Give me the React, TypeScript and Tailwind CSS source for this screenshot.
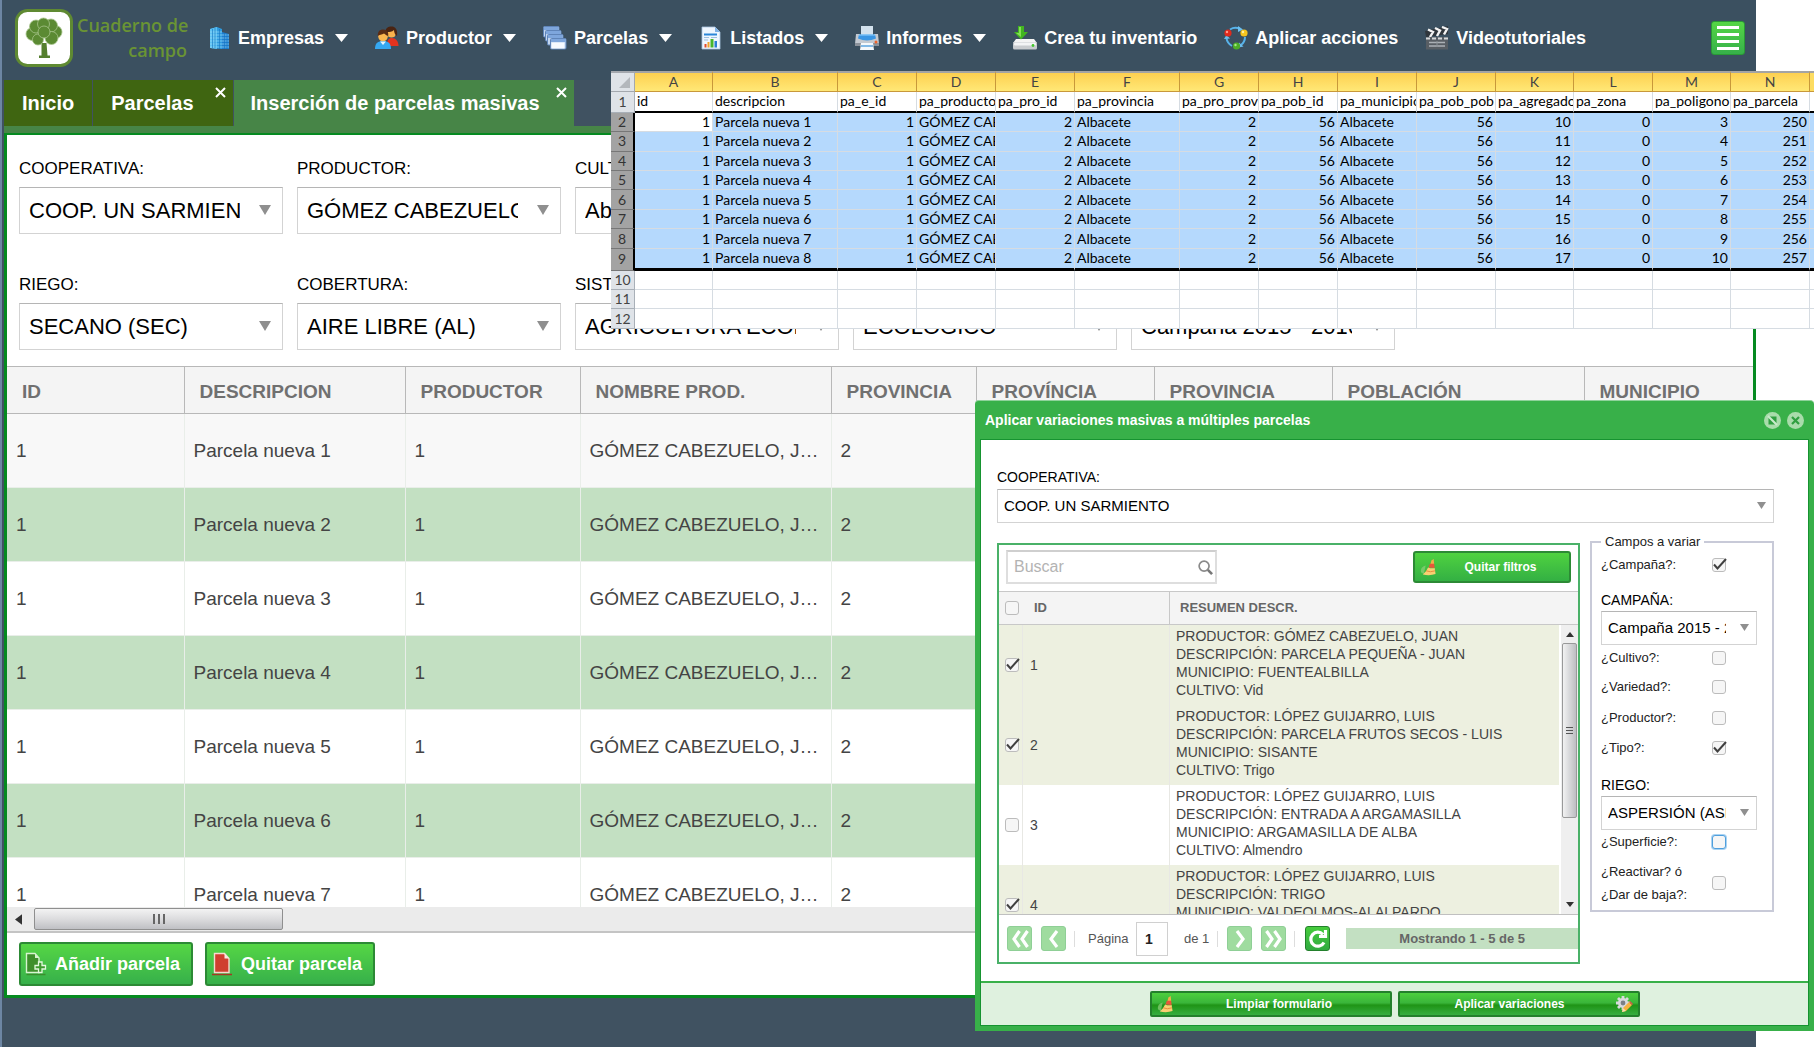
import React from "react";

const MENU: { label: string; icon: () => React.JSX.Element; menu: boolean }[] = [
  { label: "Empresas", icon: BuildingIcon, menu: true },
  { label: "Productor", icon: PeopleIcon, menu: true },
  { label: "Parcelas", icon: WindowsIcon, menu: true },
  { label: "Listados", icon: ReportIcon, menu: true },
  { label: "Informes", icon: PrinterIcon, menu: true },
  { label: "Crea tu inventario", icon: DriveIcon, menu: false },
  { label: "Aplicar acciones", icon: CycleIcon, menu: false },
  { label: "Videotutoriales", icon: ClapperIcon, menu: false },
];

const FILTERS_TOP = [
  { label: "COOPERATIVA:", value: "COOP. UN SARMIENTO" },
  { label: "PRODUCTOR:", value: "GÓMEZ CABEZUELO, JUAN" },
  { label: "CULTIVO:", value: "Abedul" },
];

const FILTERS_BOTTOM = [
  { label: "RIEGO:", value: "SECANO (SEC)" },
  { label: "COBERTURA:", value: "AIRE LIBRE (AL)" },
  { label: "SISTEMA:", value: "AGRICULTURA ECOLÓGICA" },
  { label: "CALIFICACIÓN:", value: "ECOLÓGICO" },
  { label: "CAMPAÑA:", value: "Campaña 2015 - 2016" },
];

const GRID_COLUMNS = [
  { title: "ID", width: "w-[177px]" },
  { title: "DESCRIPCION", width: "w-[221px]" },
  { title: "PRODUCTOR", width: "w-[175px]" },
  { title: "NOMBRE PROD.", width: "w-[251px]" },
  { title: "PROVINCIA", width: "w-[145px]" },
  { title: "PROVÍNCIA", width: "w-[178px]" },
  { title: "PROVINCIA", width: "w-[178px]" },
  { title: "POBLACIÓN", width: "w-[252px]" },
  { title: "MUNICIPIO", width: "" },
];

const SHEET_COLUMNS = [
  { letter: "A", field: "id", width: "w-[78px]" },
  { letter: "B", field: "descripcion", width: "w-[125px]" },
  { letter: "C", field: "pa_e_id", width: "w-[79px]" },
  { letter: "D", field: "pa_producto", width: "w-[79px]" },
  { letter: "E", field: "pa_pro_id", width: "w-[79px]" },
  { letter: "F", field: "pa_provincia", width: "w-[105px]" },
  { letter: "G", field: "pa_pro_prov", width: "w-[79px]" },
  { letter: "H", field: "pa_pob_id", width: "w-[79px]" },
  { letter: "I", field: "pa_municipio", width: "w-[79px]" },
  { letter: "J", field: "pa_pob_pob", width: "w-[79px]" },
  { letter: "K", field: "pa_agregado", width: "w-[78px]" },
  { letter: "L", field: "pa_zona", width: "w-[79px]" },
  { letter: "M", field: "pa_poligono", width: "w-[78px]" },
  { letter: "N", field: "pa_parcela", width: "w-[79px]" },
];

const PLOTS = [
  {
    id: 1,
    checked: true,
    lines: ["PRODUCTOR: GÓMEZ CABEZUELO, JUAN", "DESCRIPCIÓN: PARCELA PEQUEÑA - JUAN", "MUNICIPIO: FUENTEALBILLA", "CULTIVO: Vid"],
  },
  {
    id: 2,
    checked: true,
    lines: ["PRODUCTOR: LÓPEZ GUIJARRO, LUIS", "DESCRIPCIÓN: PARCELA FRUTOS SECOS - LUIS", "MUNICIPIO: SISANTE", "CULTIVO: Trigo"],
  },
  {
    id: 3,
    checked: false,
    lines: ["PRODUCTOR: LÓPEZ GUIJARRO, LUIS", "DESCRIPCIÓN: ENTRADA A ARGAMASILLA", "MUNICIPIO: ARGAMASILLA DE ALBA", "CULTIVO: Almendro"],
  },
  {
    id: 4,
    checked: true,
    lines: ["PRODUCTOR: LÓPEZ GUIJARRO, LUIS", "DESCRIPCIÓN: TRIGO", "MUNICIPIO: VALDEOLMOS-ALALPARDO", ""],
  },
];

/* ---------- icons ---------- */

function BuildingIcon() {
  return (
    <svg viewBox="0 0 24 24" className="size-6">
      <path d="M3 3 10 1 15 3V23L3 22Z" fill="#2f9be0" />
      <path d="M3 3 10 1V23L3 22Z" fill="#5cc1f3" />
      <path d="M15 6 22 8V23H15Z" fill="#1f7fd0" />
      <path d="M3 6h12M3 9h12M3 12h19M3 15h19M3 18h19M3 21h19M15 9h7" stroke="#9adcf8" strokeWidth=".7" />
      <path d="M5.500 3v19M8 2v20M12.500 3v20M17.500 7v16M20 8v15" stroke="#1672bd" strokeWidth=".6" />
    </svg>
  );
}

function PeopleIcon() {
  return (
    <svg viewBox="0 0 24 24" className="size-6">
      <path d="M12 20c0-6 1.500-8 5-8s6.500 3 6.500 8Z" fill="#e3331f" />
      <circle cx="16.500" cy="7" r="4.600" fill="#f9b24d" />
      <path d="M10.500 7C10 2 13 .5 16.500.5S23 3 22 10c-2-1-3-4-3-6-2 2-5 2-6 2s-1 4-2.500 1Z" fill="#4a2412" />
      <path d="M0 23c0-6 3-8 8-8s8 2 8 8Z" fill="#35a8f2" />
      <path d="M5 15.500 8 19l3-3.500Z" fill="#e8f6ff" />
      <circle cx="8" cy="10.500" r="4.800" fill="#fbb64f" />
      <path d="M2.800 10C2.500 5.500 5 3.500 8 3.500s6 2 5.200 6.500C11 9.500 10 8 9 7.500 7 9 4 8.500 2.800 10Z" fill="#5b2c14" />
    </svg>
  );
}

function WindowsIcon() {
  return (
    <svg viewBox="0 0 24 24" className="size-6">
      {[
        [0, 0],
        [2, 4],
        [4, 8],
        [7, 12],
      ].map(([x, y]) => (
        <g key={x}>
          <rect x={x + 0.5} y={y + 0.5} width="15.500" height="10.500" rx="1" fill="#c3d7f0" stroke="#5f84b8" />
          <rect x={x + 1} y={y + 1} width="14.500" height="3" fill="#7ea6dc" />
        </g>
      ))}
      <rect x="8.500" y="16.500" width="13" height="6" fill="#f6faff" />
    </svg>
  );
}

function ReportIcon() {
  return (
    <svg viewBox="0 0 24 24" className="size-6">
      <path d="M3 1h13l5 5v17H3Z" fill="#eef6ff" stroke="#a8c4e0" strokeWidth=".8" />
      <path d="M16 1v5h5Z" fill="#7fb2e6" />
      <path d="M5 8.500h13" stroke="#2a86d8" strokeWidth="2" />
      <path d="M5 11.500h5M5 14h4M12 11.500h6" stroke="#9dbfe0" />
      <rect x="5.500" y="18" width="2" height="3.500" fill="#e44a2a" />
      <rect x="8.500" y="16" width="2" height="5.500" fill="#f2a22a" />
      <rect x="11.500" y="13" width="3" height="8.500" fill="#48b62c" />
      <rect x="15.500" y="15" width="2.500" height="6.500" fill="#2b7fd4" />
    </svg>
  );
}

function PrinterIcon() {
  return (
    <svg viewBox="0 0 24 24" className="size-6">
      <rect x="6" y="0" width="12" height="10" fill="#d3e2ee" />
      <path d="M1 8h4v4h14V8h4l1 10H0Z" fill="#c3c9d1" />
      <path d="M4 8.500h16l1 4q-9 4-18 0Z" fill="#3a96e4" />
      <path d="M4 9h16" stroke="#8fd0ff" />
      <path d="M0 17h24v3H0Z" fill="#8b929b" />
      <path d="M6 17h12l1 7H5Z" fill="#f4f8fc" />
      <path d="M6 20h12" stroke="#5ba5e0" strokeWidth="1.500" />
      <circle cx="21" cy="16" r="1.500" fill="#f0642c" />
    </svg>
  );
}

function DriveIcon() {
  return (
    <svg viewBox="0 0 24 24" className="size-6">
      <path d="M3 13h18l3 4H0Z" fill="#f4f4f4" />
      <rect x="0" y="16" width="24" height="7.500" rx="1.500" fill="#c9cccf" />
      <rect x="1" y="16.500" width="22" height="3" rx="1" fill="#f3f4f5" />
      <circle cx="20" cy="19.500" r="1.400" fill="#43c62b" />
      <path d="M5 0h6v6h4l-7 7.500L1 6h4Z" fill="#42b51f" />
      <path d="M6 1h2v10L3 7h3Z" fill="#83e055" />
    </svg>
  );
}

function CycleIcon() {
  return (
    <svg viewBox="0 0 24 24" className="size-6">
      <g fill="none" stroke="#58b3ea" strokeWidth="2">
        <path d="M6 3.500q5-3 10-.5" />
        <path d="M21 11q0 5-4 8" />
        <path d="M8 20q-5-3-5.500-8" />
      </g>
      <path d="m14 0 5 3.500-5 2.500ZM15 16.500l-.5 5 5-1ZM0 13l2.500-4L6 12.500Z" fill="#6cc0f0" />
      <circle cx="4" cy="7" r="3.600" fill="#e02a1c" />
      <circle cx="20" cy="7" r="3.600" fill="#f7c51e" />
      <circle cx="12.500" cy="20" r="3.600" fill="#4cae27" />
      <circle cx="3" cy="6" r="1.200" fill="#ff9a8c" />
      <circle cx="19" cy="6" r="1.200" fill="#fff0a0" />
      <circle cx="11.500" cy="19" r="1.200" fill="#a8e884" />
    </svg>
  );
}

function ClapperIcon() {
  return (
    <svg viewBox="0 0 24 24" className="size-6">
      <path d="M0 5 23 0v8L1 11Z" fill="#30363c" />
      <path d="M3 3.500 8 6l-3 5M10 2l5 2.500-3 5.500M17 1l5 2-3 5.500" fill="none" stroke="#f3f3f3" strokeWidth="2.400" />
      <rect x="1" y="11" width="22" height="12.500" fill="#585e64" />
      <path d="M1 12.500h22" stroke="#d5d8da" strokeWidth="2" strokeDasharray="4 2" />
      <path d="M4 16.500h16M4 20h16" stroke="#aab0b5" strokeWidth="1.500" />
      <path d="M12 15v6" stroke="#8a9095" />
    </svg>
  );
}

function TreeLogo() {
  return (
    <svg viewBox="0 0 58 58" className="size-[58px]">
      <rect x="1.500" y="1.500" width="55" height="55" rx="11" fill="#fff" stroke="#5f8a32" strokeWidth="3" />
      <path d="M26.500 34h5l1 12.500h2.500V49H24v-2.500h2.500Z" fill="#557f2e" />
      <g fill="#5b8a33" stroke="#a7c48b" strokeWidth=".8">
        <circle cx="17.500" cy="25" r="6.500" />
        <circle cx="40.500" cy="23" r="6.500" />
        <circle cx="21" cy="17.500" r="6.500" />
        <circle cx="36" cy="16.500" r="6.500" />
        <circle cx="28.500" cy="15" r="6" />
        <circle cx="36.500" cy="29" r="6.500" />
        <circle cx="23" cy="30.500" r="5.500" />
        <circle cx="29" cy="23" r="6" />
      </g>
    </svg>
  );
}

function Caret({ className }: { className: string }) {
  return (
    <svg viewBox="0 0 12 9" className={className} preserveAspectRatio="none" aria-hidden="true">
      <path d="M0 0h12L6 9Z" fill="currentColor" />
    </svg>
  );
}

function BroomIcon() {
  return (
    <svg viewBox="0 0 18 18" className="size-[17px] shrink-0">
      <path d="M1 14q-1-5 5-7l-2 9Z" fill="#8fce7c" opacity=".7" />
      <path d="M12 1.500 14.500 0 15 5l-4 1Z" fill="#f0b04a" />
      <path d="M10.500 5h4.500l.5 4.500-6.500-.5Z" fill="#e8573a" />
      <path d="M8.500 9q4 1.500 7 .5l1 6.500q-6 2-13.500.5 4-3 5.500-7.500Z" fill="#f9cf72" />
      <path d="m6.500 12.500 4.500 1 5-1" stroke="#e8893a" strokeWidth="1" fill="none" />
    </svg>
  );
}

function GearPencilIcon() {
  return (
    <svg viewBox="0 0 18 18" className="size-[18px] shrink-0">
      <g stroke="#d9dadd" strokeWidth="2.800">
        <path d="M8 1v14M1 8h14M3 3l10 10M13 3 3 13" />
      </g>
      <circle cx="8" cy="8" r="5" fill="#d9dadd" />
      <circle cx="8" cy="8" r="2.400" fill="#7b8086" />
      <path d="m7 17 1-4 6-6 3 3-6 6Z" fill="#f5b23f" />
      <path d="m7 17 1-4 3 3Z" fill="#f7dfb4" />
      <path d="m14 7 1-1 3 3-1 1Z" fill="#d5584a" />
    </svg>
  );
}

function SheetAddIcon() {
  return (
    <svg viewBox="0 0 22 24" className="h-6 w-[22px] shrink-0">
      <path d="M1.500 22.500h19" stroke="#3b8d2c" strokeWidth="1.500" />
      <path d="M1.500 1.500h8.500l4 4.500v14.500H1.500Z" fill="#3f8f2c" stroke="#d8f3d0" strokeWidth="1.400" />
      <path d="M10 1.500V6h4Z" fill="#d8f3d0" />
      <path d="M13.500 10h3.500v3.500h3.500V17H17v3.500h-3.500V17H10v-3.500h3.500Z" fill="#3f9a2f" stroke="#e4f8de" strokeWidth="1.300" />
    </svg>
  );
}

function SheetRemoveIcon() {
  return (
    <svg viewBox="0 0 22 24" className="h-6 w-[22px] shrink-0">
      <path d="M1 22.500h20" stroke="#a33a22" strokeWidth="1.500" />
      <path d="M3.500 1.500h10l4.500 5v14H3.500Z" fill="#cf3f2f" stroke="#f6d9cf" strokeWidth="1.400" />
      <path d="M13.500 1.500v5H18Z" fill="#fbeae4" />
    </svg>
  );
}

/* ---------- shared controls ---------- */

function Combo({
  id,
  label,
  value,
  labelClass,
  selectClass,
  caretClass,
}: {
  id: string;
  label: string;
  value: string;
  labelClass: string;
  selectClass: string;
  caretClass: string;
}) {
  return (
    <div className="flex flex-col">
      <label htmlFor={id} className={`text-black ${labelClass}`}>
        {label}
      </label>
      <div className="relative">
        <select
          id={id}
          className={`block w-full appearance-none overflow-hidden border border-[#d3d3d3] border-t-[#b5b5b5] bg-white text-black outline-none ${selectClass}`}
        >
          <option>{value}</option>
        </select>
        <Caret className={`pointer-events-none absolute text-[#8f8f8f] ${caretClass}`} />
      </div>
    </div>
  );
}

function Check({ label, id, checked = false, focus = false }: { label?: string; id?: string; checked?: boolean; focus?: boolean }) {
  return (
    <span className="relative block size-[14px]">
      <input
        type="checkbox"
        id={id}
        aria-label={label}
        defaultChecked={checked}
        className={`peer block size-[14px] appearance-none rounded-[3px] border bg-[#f6f6f6] ${
          focus ? "border-[#4f9fdc] ring-1 ring-[#a9d3f3]" : "border-[#bcbcbc]"
        }`}
      />
      <svg viewBox="0 0 16 16" className="pointer-events-none absolute -top-px left-0 hidden size-4 peer-checked:block">
        <path d="M2 7.500 5.500 11.500 14 2" fill="none" stroke="#404040" strokeWidth="2" />
      </svg>
    </span>
  );
}

function FlagRow({ id, text, height, checked, focus }: { id: string; text: string; height: string; checked?: boolean; focus?: boolean }) {
  return (
    <div className={`flex items-center ${height}`}>
      <label htmlFor={id} className="w-[111px] text-[13px]">
        {text}
      </label>
      <Check id={id} checked={checked} focus={focus} />
    </div>
  );
}

/* ---------- main window ---------- */

function TopBar() {
  return (
    <header className="flex h-20 items-center bg-[#3b5060] pr-[11px] pb-1 pl-[13px]">
      <TreeLogo />
      <div className="ml-1 w-[110px] text-right font-['Open_Sans',sans-serif] text-[18px] leading-[25px] font-semibold whitespace-nowrap text-[#6a9434]">
        Cuaderno de
        <br />
        campo
      </div>
      <nav className="ml-5 flex flex-1 items-center gap-[27px]">
        {MENU.map(({ label, icon: Icon, menu }) => (
          <button key={label} type="button" className="flex items-center gap-[7px] text-[18px] leading-6 font-bold whitespace-nowrap text-white">
            <Icon />
            {label}
            {menu && <Caret className="ml-1 h-2 w-[13px]" />}
          </button>
        ))}
      </nav>
      <button
        type="button"
        aria-label="Menú"
        className="flex h-[34px] w-[34px] flex-col items-center justify-center gap-1 rounded-[3px] border border-[#2a9a35] bg-linear-to-b from-[#55d644] to-[#36b04a]"
      >
        <span className="h-[3px] w-[22px] bg-white" />
        <span className="h-[3px] w-[22px] bg-white" />
        <span className="h-[3px] w-[22px] bg-white" />
        <span className="h-[3px] w-[22px] bg-white" />
      </button>
    </header>
  );
}

function TabClose({ label }: { label: string }) {
  return (
    <button type="button" aria-label={label} className="absolute top-[7px] right-[7px]">
      <svg viewBox="0 0 11 11" className="size-[11px]">
        <path d="m1 1 9 9M10 1l-9 9" stroke="#fff" strokeWidth="2" />
      </svg>
    </button>
  );
}

function Tabs() {
  return (
    <div className="flex border-b-[7px] border-[#478547] text-[20px] leading-[46px] font-bold whitespace-nowrap text-white">
      <div className="mr-px bg-[#3f6511] px-[18px]">Inicio</div>
      <div className="relative mr-px bg-[#3f6511] pr-[39px] pl-[18px]">
        Parcelas
        <TabClose label="Cerrar Parcelas" />
      </div>
      <div className="relative bg-[#478547] pr-[34px] pl-[17px]">
        Inserción de parcelas masivas
        <TabClose label="Cerrar Inserción de parcelas masivas" />
      </div>
    </div>
  );
}

function FilterRow({ items, prefix }: { items: { label: string; value: string }[]; prefix: string }) {
  return (
    <div className="grid grid-cols-[repeat(5,264px)] gap-x-[14px]">
      {items.map((f, i) => (
        <Combo
          key={f.label}
          id={`${prefix}-${i}`}
          label={f.label}
          value={f.value}
          labelClass="text-[17px] leading-6 mb-1.5"
          selectClass="h-[47px] pl-[9px] pr-[42px] text-[22px]"
          caretClass="top-[18px] right-3 h-[10px] w-3"
        />
      ))}
    </div>
  );
}

function ParcelGrid() {
  return (
    <div>
      <div className="h-[541px] overflow-hidden border-t border-[#b8b8b8]">
        <table className="w-full table-fixed border-collapse text-left">
          <thead>
            <tr className="h-[46px] bg-[#f4f4f4]">
              {GRID_COLUMNS.map((c, i) => (
                <th
                  key={i}
                  className={`border-r border-b border-[#b8b8b8] pt-1 pl-[15px] text-[19px] leading-6 font-bold whitespace-nowrap text-[#707070] last:border-r-0 ${c.width}`}
                >
                  {c.title}
                </th>
              ))}
            </tr>
          </thead>
          <tbody className="text-[19px] leading-6 text-[#444]">
            {[1, 2, 3, 4, 5, 6, 7].map((n) => (
              <tr
                key={n}
                className={`h-[74px] [&>td]:truncate [&>td]:border-r [&>td]:border-b [&>td]:border-[#e9eee9] [&>td]:pt-0.5 [&>td]:pr-1 [&>td]:pl-[9px] ${
                  n === 1 ? "bg-[#f8f8f8]" : n % 2 ? "bg-white" : "bg-[#c3e0c2]"
                }`}
              >
                <td>1</td>
                <td>Parcela nueva {n}</td>
                <td>1</td>
                <td>GÓMEZ CABEZUELO, JUAN</td>
                <td>2</td>
                <td />
                <td />
                <td />
                <td />
              </tr>
            ))}
          </tbody>
        </table>
      </div>
      <div className="flex h-[26px] items-center gap-3 border-b-2 border-[#c4c4c4] bg-[#ebebeb] pl-2">
        <svg viewBox="0 0 8 12" className="h-[11px] w-[7px]">
          <path d="M8 0v12L0 6Z" fill="#333" />
        </svg>
        <div className="flex h-[22px] w-[249px] items-center justify-center gap-[3px] rounded-[2px] border border-[#8f8f8f] bg-linear-to-b from-[#f3f3f3] via-[#dcdcde] to-[#bfc0c4]">
          <span className="h-[10px] w-0.5 bg-[#666]" />
          <span className="h-[10px] w-0.5 bg-[#666]" />
          <span className="h-[10px] w-0.5 bg-[#666]" />
        </div>
      </div>
    </div>
  );
}

function MainWindow() {
  const actionClass =
    "flex h-11 items-center gap-2 rounded-[3px] border-2 border-[#2c8a35] bg-linear-to-b from-[#55d644] to-[#36b04a] pl-1 pr-[11px] text-[18px] font-bold text-white";
  return (
    <div className="mr-[58px] min-h-screen border-l-2 border-[#6d86a3] bg-[#405261] pl-0.5">
      <div className="-ml-0.5">
        <TopBar />
      </div>
      <Tabs />
      <main className="border-x-[3px] border-t-2 border-b-[3px] border-[#058a20] bg-white">
        <div className="flex flex-col gap-[39px] overflow-hidden px-3 pt-[22px] pb-4">
          <FilterRow items={FILTERS_TOP} prefix="top" />
          <FilterRow items={FILTERS_BOTTOM} prefix="bottom" />
        </div>
        <ParcelGrid />
        <div className="flex gap-3 px-3 pt-[9px] pb-[9px]">
          <button type="button" className={actionClass}>
            <SheetAddIcon />
            Añadir parcela
          </button>
          <button type="button" className={actionClass}>
            <SheetRemoveIcon />
            Quitar parcela
          </button>
        </div>
      </main>
    </div>
  );
}

/* ---------- spreadsheet ---------- */

function Spreadsheet() {
  const cell = "overflow-hidden whitespace-nowrap border-r border-b border-[#d6dce2] px-0.5 py-0";
  return (
    <div className="absolute top-[71px] right-0 left-[611px] overflow-hidden bg-white font-['Lato','Open_Sans',sans-serif] text-[14px] leading-[16px] text-black">
      <table className="h-[258px] w-full table-fixed border-separate border-spacing-0">
        <thead>
          <tr className="h-[21px] text-[#444]">
            <th className="w-6 border-t-2 border-r border-b border-[#a4a8ae] bg-[#dfe3e8] p-0">
              <svg viewBox="0 0 10 10" className="ml-2 size-[11px]">
                <path d="M10 0v10H0Z" fill="#b3b7bc" />
              </svg>
            </th>
            {SHEET_COLUMNS.map((c) => (
              <th
                key={c.letter}
                className={`border-t-2 border-r border-b border-t-[#a4a4a4] border-r-[#c8983a] border-b-[#c8983a] bg-linear-to-b from-[#fdd04f] to-[#ffe876] p-0 font-normal ${c.width}`}
              >
                {c.letter}
              </th>
            ))}
            <th className="border-t-2 border-b border-t-[#a4a4a4] border-b-[#c8983a] bg-[#fddc60] p-0" />
          </tr>
        </thead>
        <tbody>
          <tr>
            <th className="border-r border-b border-[#a9b0b8] bg-[#dfe3e8] p-0 font-normal text-[#444]">1</th>
            {SHEET_COLUMNS.map((c) => (
              <td key={c.letter} className="overflow-hidden border-r border-b-2 border-r-[#d6dce2] border-b-black px-0.5 py-0 whitespace-nowrap">
                {c.field}
              </td>
            ))}
            <td className="border-b-2 border-black p-0" />
          </tr>
          {[1, 2, 3, 4, 5, 6, 7, 8].map((n) => {
            const values = [1, `Parcela nueva ${n}`, 1, "GÓMEZ CABEZUELO", 2, "Albacete", 2, 56, "Albacete", 56, 9 + n, 0, 2 + n, 249 + n];
            return (
              <tr key={n}>
                <th className="border-r-2 border-b border-r-black border-b-[#777] bg-[#a3a3a3] p-0 font-normal text-[#333]">{n + 1}</th>
                {values.map((v, i) => (
                  <td
                    key={i}
                    className={`${cell} ${typeof v === "number" ? "text-right" : "text-left"} ${n === 1 && i === 0 ? "bg-white" : "bg-[#b5d9fd]"} ${
                      n === 8 ? "border-b-[3px] border-b-black" : ""
                    }`}
                  >
                    {v}
                  </td>
                ))}
                <td className={`bg-[#b5d9fd] p-0 ${n === 8 ? "border-b-[3px] border-black" : "border-b border-[#d6dce2]"}`} />
              </tr>
            );
          })}
          {[10, 11, 12].map((n) => (
            <tr key={n}>
              <th className="border-r border-b border-[#a9b0b8] bg-[#dfe3e8] p-0 font-normal text-[#444]">{n}</th>
              {SHEET_COLUMNS.map((c) => (
                <td key={c.letter} className={cell} />
              ))}
              <td className="border-b border-[#d6dce2] p-0" />
            </tr>
          ))}
        </tbody>
      </table>
    </div>
  );
}

/* ---------- dialog ---------- */

function PagerButton({ label, path, active = false }: { label: string; path: string; active?: boolean }) {
  return (
    <button
      type="button"
      aria-label={label}
      className={`flex size-[25px] items-center justify-center rounded-[3px] border ${
        active ? "border-[#23802c] bg-linear-to-b from-[#46cc3c] to-[#30aa40]" : "border-[#8fcf96] bg-[#9fdc9f]"
      }`}
    >
      <svg viewBox="0 0 20 20" className="size-5">
        <path d={path} fill="none" stroke="#fff" strokeWidth="3.200" />
      </svg>
    </button>
  );
}

function PlotPicker() {
  return (
    <div className="flex flex-1 flex-col border-2 border-[#4ab168]">
      <div className="flex items-start justify-between border-b border-[#c8c8c8] px-[7px] pt-[5px] pb-[7px]">
        <div className="relative">
          <input
            type="text"
            aria-label="Buscar"
            placeholder="Buscar"
            className="block h-[34px] w-[211px] border-2 border-[#dedede] border-t-[#cfcfcf] pr-7 pl-1.5 text-[16px] placeholder:text-[#b3b3b3]"
          />
          <svg viewBox="0 0 16 16" className="absolute top-[10px] right-1 size-[15px]">
            <circle cx="6.500" cy="6.500" r="5.300" fill="none" stroke="#8a8a8a" strokeWidth="1.800" />
            <path d="m10.500 10.500 4.500 4.500" stroke="#777" strokeWidth="2.800" />
          </svg>
        </div>
        <button
          type="button"
          className="mt-px flex h-8 w-[158px] items-center rounded-[3px] border-2 border-[#2c8a35] bg-linear-to-b from-[#4fd23f] to-[#33b043] px-[5px] text-[12px] font-bold text-white"
        >
          <BroomIcon />
          <span className="flex-1">Quitar filtros</span>
        </button>
      </div>

      <div className="flex h-[323px] overflow-hidden border-b border-[#c0c0c0]">
        <table className="-mr-[19px] w-full shrink-0 table-fixed border-separate border-spacing-0 self-start text-left text-[14px] leading-[18px] text-[#444]">
          <thead>
            <tr className="h-[33px] bg-[#f4f4f4] text-[13px] text-[#666]">
              <th className="w-[24px] border-b border-[#c8c8c8] p-0 pl-1.5">
                <Check label="Seleccionar todas" />
              </th>
              <th className="w-[147px] border-r border-b border-[#c8c8c8] p-0 pl-[11px]">ID</th>
              <th className="border-b border-[#c8c8c8] p-0 pl-[10px]">RESUMEN DESCR.</th>
            </tr>
          </thead>
          <tbody>
            {PLOTS.map((p) => (
              <tr key={p.id} className={`h-20 ${p.checked ? "bg-[#edf0e0]" : "bg-white"}`}>
                <td className="border-r border-[#e8e8e4] p-0 pl-1.5">
                  <Check label={`Parcela ${p.id}`} checked={p.checked} />
                </td>
                <td className="border-r border-[#e8e8e4] p-0 pl-[7px]">{p.id}</td>
                <td className="p-0 pb-1 pl-1.5 align-middle whitespace-nowrap">
                  {p.lines.map((l, i) => (
                    <div key={i} className="h-[18px]">
                      {l}
                    </div>
                  ))}
                </td>
              </tr>
            ))}
          </tbody>
        </table>
        <div className="z-10 mt-[33px] flex w-[19px] shrink-0 flex-col items-center border-l-2 border-white bg-[#efefef]">
          <svg viewBox="0 0 8 5" className="mt-[7px] h-[5px] w-2">
            <path d="M0 5h8L4 0Z" fill="#333" />
          </svg>
          <div className="mt-[6px] flex h-[175px] w-[15px] flex-col items-center justify-center gap-0.5 rounded-[2px] border border-[#999] bg-linear-to-r from-[#f2f2f2] to-[#bdbec2]">
            <span className="h-px w-[7px] bg-[#555]" />
            <span className="h-px w-[7px] bg-[#555]" />
            <span className="h-px w-[7px] bg-[#555]" />
          </div>
          <Caret className="mt-auto mb-[7px] h-[5px] w-2 text-[#333]" />
        </div>
      </div>

      <div className="flex h-[47px] items-center pl-2 text-[13px] text-[#555]">
        <PagerButton label="Primera página" path="M9.500 2 4 10l5.500 8M17.500 2 12 10l5.500 8" />
        <span className="w-[9px]" />
        <PagerButton label="Página anterior" path="M13 2 7 10l6 8" />
        <span className="ml-2 h-4 w-px bg-[#ddd]" />
        <label htmlFor="page" className="ml-[13px] w-12">
          Página
        </label>
        <input
          id="page"
          type="text"
          defaultValue="1"
          className="h-[34px] w-8 border border-[#d0d0d0] pl-2 text-[14px] font-bold text-[#222]"
        />
        <span className="ml-4">de 1</span>
        <span className="ml-2 h-4 w-px bg-[#ddd]" />
        <span className="w-[9px]" />
        <PagerButton label="Página siguiente" path="m7 2 6 8-6 8" />
        <span className="w-[9px]" />
        <PagerButton label="Última página" path="m2.500 2 5.500 8-5.500 8M10.500 2l5.500 8-5.500 8" />
        <span className="ml-2 h-4 w-px bg-[#ddd]" />
        <span className="w-[10px]" />
        <PagerButton label="Recargar" path="M16 13.500A7 7 0 1 1 15 5.500M17.500 1v6.500H11" active />
        <span className="ml-4 flex-1 bg-[#c3e0c2] text-center text-[13px] leading-[21px] font-bold text-[#666]">Mostrando 1 - 5 de 5</span>
      </div>
    </div>
  );
}

function FieldPicker() {
  const comboProps = {
    labelClass: "text-[14px] leading-[17px] mt-[14px] mb-0.5",
    selectClass: "h-[34px] pl-[6px] pr-[30px] text-[15px]",
    caretClass: "top-[13px] right-2 h-[7px] w-[9px]",
  };
  return (
    <fieldset className="w-[184px] border-2 border-[#c8cad8] px-[9px] pb-1 text-[#222]">
      <legend className="px-1 text-[13px] leading-[18px]">Campos a variar</legend>
      <FlagRow id="f-campana" text="¿Campaña?:" height="h-[27px]" checked />
      <div className="mr-1.5">
        <Combo id="campana" label="CAMPAÑA:" value="Campaña 2015 - 2016" {...comboProps} />
      </div>
      <FlagRow id="f-cultivo" text="¿Cultivo?:" height="h-[26px]" />
      <FlagRow id="f-variedad" text="¿Variedad?:" height="h-[31px]" />
      <FlagRow id="f-productor" text="¿Productor?:" height="h-[31px]" />
      <FlagRow id="f-tipo" text="¿Tipo?:" height="h-[30px]" checked />
      <div className="mr-1.5">
        <Combo id="riego" label="RIEGO:" value="ASPERSIÓN (ASP)" {...comboProps} />
      </div>
      <FlagRow id="f-superficie" text="¿Superficie?:" height="h-[24px]" focus />
      <div className="mt-1.5 flex items-center">
        <label htmlFor="f-reactivar" className="w-[111px] text-[13px] leading-[23px]">
          ¿Reactivar? ó
          <br />
          ¿Dar de baja?:
        </label>
        <Check id="f-reactivar" />
      </div>
    </fieldset>
  );
}

function Dialog() {
  const footClass =
    "flex h-[26px] w-[242px] items-center rounded-[2px] border-2 border-[#23802c] bg-[linear-gradient(180deg,#4ccf3e_0%,#3ab53a_45%,#1f9416_55%,#36ae40_100%)] px-[5px] text-[12px] font-bold text-white";
  return (
    <section
      role="dialog"
      aria-label="Aplicar variaciones masivas a múltiples parcelas"
      className="absolute top-[400px] right-0 left-[975px] rounded-t-[4px] border-t border-[#8fd29a] bg-[#38b049] px-[5px] pb-[5px]"
    >
      <header className="flex h-[38px] items-center gap-1.5 pr-[5px] pl-[5px] text-white">
        <h2 className="flex-1 text-[14px] font-bold">Aplicar variaciones masivas a múltiples parcelas</h2>
        <button type="button" aria-label="Restaurar">
          <svg viewBox="0 0 17 17" className="size-[17px]">
            <circle cx="8.500" cy="8.500" r="8.500" fill="#a9dcab" />
            <rect x="4.500" y="4.500" width="8" height="8" fill="#2f9f40" />
            <path d="m4 4 9 9" stroke="#c9ebca" strokeWidth="2.200" />
          </svg>
        </button>
        <button type="button" aria-label="Cerrar">
          <svg viewBox="0 0 17 17" className="size-[17px]">
            <circle cx="8.500" cy="8.500" r="8.500" fill="#a9dcab" />
            <path d="m5 5 7 7M12 5l-7 7" stroke="#2f9f40" strokeWidth="2.200" />
          </svg>
        </button>
      </header>
      <div className="border border-[#169330] bg-white">
        <div className="pt-[29px] pr-[34px] pb-[17px] pl-4">
          <Combo
            id="coop"
            label="COOPERATIVA:"
            value="COOP. UN SARMIENTO"
            labelClass="text-[14px] leading-[17px] mb-[3px]"
            selectClass="h-[34px] pl-1.5 pr-8 text-[15px]"
            caretClass="top-[13px] right-2 h-[7px] w-[9px]"
          />
          <div className="mt-[10px] flex items-start gap-[10px]">
            <div className="mt-[10px] flex flex-1">
              <PlotPicker />
            </div>
            <FieldPicker />
          </div>
        </div>
        <footer className="flex justify-center gap-1.5 border-t-2 border-[#38b049] bg-[#dff1df] py-2">
          <button type="button" className={footClass}>
            <BroomIcon />
            <span className="flex-1">Limpiar formulario</span>
          </button>
          <button type="button" className={footClass}>
            <span className="flex-1">Aplicar variaciones</span>
            <GearPencilIcon />
          </button>
        </footer>
      </div>
    </section>
  );
}

export default function App() {
  return (
    <div className="relative overflow-hidden bg-white font-['Liberation_Sans',Arial,sans-serif]">
      <MainWindow />
      <Spreadsheet />
      <Dialog />
    </div>
  );
}
